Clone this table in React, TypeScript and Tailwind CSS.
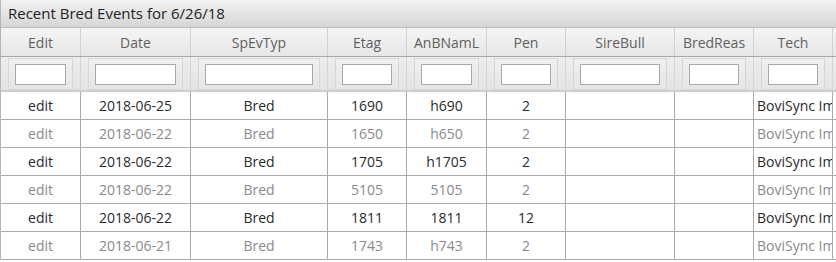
import React from "react";

const columns = ["Edit", "Date", "SpEvTyp", "Etag", "AnBNamL", "Pen", "SireBull", "BredReas", "Tech", ""];

const rows = [
  ["edit", "2018-06-25", "Bred", "1690", "h690", "2", "", "", "BoviSync Import"],
  ["edit", "2018-06-22", "Bred", "1650", "h650", "2", "", "", "BoviSync Import"],
  ["edit", "2018-06-22", "Bred", "1705", "h1705", "2", "", "", "BoviSync Import"],
  ["edit", "2018-06-22", "Bred", "5105", "5105", "2", "", "", "BoviSync Import"],
  ["edit", "2018-06-22", "Bred", "1811", "1811", "12", "", "", "BoviSync Import"],
  ["edit", "2018-06-21", "Bred", "1743", "h743", "2", "", "", "BoviSync Import"],
];

const grid = "grid grid-cols-[80px_110px_137px_79px_80px_79px_109px_79px_79px_120px]";

export default function App() {
  return (
    <div
      className="w-[836px] h-[262px] overflow-hidden bg-white text-[14px]"
      style={{ fontFamily: '"Open Sans", "Noto Sans", sans-serif' }}
    >
      <div className="w-[960px] border-l border-[#a9b7c6]">
        {/* title bar */}
        <div className="h-[28px] flex items-center pl-[7px] text-[15px] text-[#222] bg-gradient-to-b from-[#f2f2f2] to-[#d6d6d6] border-b border-[#bdbdbd]">
          Recent Bred Events for 6/26/18
        </div>

        {/* column headers */}
        <div className={`${grid} h-[29px] bg-gradient-to-b from-[#f5f5f5] to-[#e7e7e7] border-b border-[#a8a8a8]`}>
          {columns.map((c, i) => (
            <div key={i} className="flex items-center justify-center border-r border-[#d2d2d2] text-[#606060]">
              {c}
            </div>
          ))}
        </div>

        {/* filter row */}
        <div className={`${grid} h-[35px] bg-gradient-to-b from-[#eeeeee] to-[#e3e3e3] border-b-2 border-[#cdcdcd]`}>
          {columns.map((c, i) => (
            <div key={i} className="border-r border-[#d6d6d6] px-[7px] pt-px pb-[1px]">
              {c !== "" && (
                <div className="h-[32px] border border-[#d6d6d6] bg-gradient-to-b from-[#f0f0f0] to-[#e6e6e6] px-[6px] pt-[5px]">
                  <input className="block w-full h-[21px] bg-white border border-[#a9a9a9] outline-none" />
                </div>
              )}
            </div>
          ))}
        </div>

        {/* body */}
        {rows.map((r, ri) => (
          <div
            key={ri}
            className={`${grid} h-[28px] border-b border-[#ababab] ${ri % 2 === 0 ? "text-[#2b2b2b]" : "text-[#8a8a8a]"}`}
          >
            {r.map((v, ci) => (
              <div
                key={ci}
                className={`flex items-center border-r border-[#ababab] overflow-hidden whitespace-nowrap ${
                  ci === 8 ? "justify-start pl-[3px]" : "justify-center"
                }`}
              >
                {v}
              </div>
            ))}
            <div className="border-r border-[#ababab]" />
          </div>
        ))}
      </div>
    </div>
  );
}
